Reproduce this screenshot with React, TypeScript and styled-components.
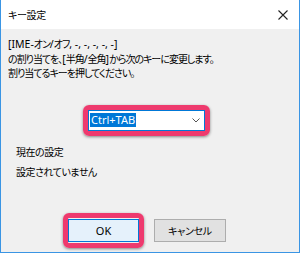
import React from "react";
import styled, { createGlobalStyle } from "styled-components";

const Global = createGlobalStyle`
  html, body { margin: 0; padding: 0; background: #ffffff; }
  body {
    font-family: "Noto Sans", "Noto Sans CJK JP", sans-serif;
    font-size: 10px;
    letter-spacing: -1px;
    color: #000;
    font-feature-settings: "palt";
  }
`;

const Window = styled.div`
  width: 300px;
  height: 253px;
  box-sizing: border-box;
  border: 1px solid #3a95e4;
  border-top: none;
  display: flex;
  flex-direction: column;
  background: #f0f0f0;
`;

const TitleBar = styled.div`
  height: 29px;
  flex: none;
  background: #ffffff;
  display: flex;
  align-items: center;
  justify-content: space-between;
  padding: 0 11px 0 7px;
`;

const Title = styled.span`
  line-height: 14px;
  letter-spacing: -0.3px;
  margin-top: 1px;
`;

const Body = styled.div`
  flex: 1;
  display: flex;
  flex-direction: column;
  padding: 8px 7px 4px 7px;
`;

const Message = styled.div`
  line-height: 14.5px;
`;

const Latin = styled.span`
  font-size: 10.5px;
  letter-spacing: 0;
`;

const Highlight = styled.div<{ $pad?: string }>`
  border: 5px solid #ee3a6e;
  border-radius: 6px;
  padding: ${(p) => p.$pad ?? "0"};
  box-shadow: 0 1px 3px rgba(0, 0, 0, 0.45);
  display: flex;
`;

const ComboArea = styled.div`
  display: flex;
  margin: 24px 0 0 75px;
`;

const Combo = styled.div`
  width: 117px;
  height: 21px;
  box-sizing: border-box;
  border: 1px solid #0078d7;
  background: #ffffff;
  display: flex;
  align-items: center;
  justify-content: space-between;
  padding: 0 4px 0 1px;
`;

const Selected = styled.span`
  background: #0078d7;
  color: #ffffff;
  font-size: 11px;
  letter-spacing: 0;
  line-height: 14px;
  padding: 0 1px;
`;

const Label = styled.div<{ $gap: number }>`
  margin: ${(p) => p.$gap}px 0 0 8px;
  line-height: 14px;
  letter-spacing: -0.5px;
`;

const ButtonRow = styled.div`
  margin: auto 0 0 55px;
  display: flex;
  align-items: center;
  gap: 10px;
`;

const Button = styled.button<{ $primary?: boolean }>`
  width: ${(p) => (p.$primary ? 71 : 72)}px;
  height: 23px;
  box-sizing: border-box;
  border: 1px solid ${(p) => (p.$primary ? "#0078d7" : "#adadad")};
  background: ${(p) => (p.$primary ? "#e5f1fb" : "#e1e1e1")};
  font-family: inherit;
  font-feature-settings: "palt";
  font-size: ${(p) => (p.$primary ? 11 : 10)}px;
  letter-spacing: ${(p) => (p.$primary ? 0 : -0.3)}px;
  color: #000;
  padding: 0;
  margin: 0;
`;

const CloseIcon = () => (
  <svg width="10" height="10" viewBox="0 0 10 10">
    <path d="M0.5 0.5 L9.5 9.5 M9.5 0.5 L0.5 9.5" stroke="#222" strokeWidth="1.1" />
  </svg>
);

const Chevron = () => (
  <svg width="8" height="5" viewBox="0 0 8 5">
    <path d="M0.5 0.5 L4 4 L7.5 0.5" stroke="#555" strokeWidth="1" fill="none" />
  </svg>
);

export default function App() {
  return (
    <>
      <Global />
      <Window>
        <TitleBar>
          <Title>キー設定</Title>
          <CloseIcon />
        </TitleBar>
        <Body>
          <Message>
            <Latin>[IME-</Latin>オン<Latin>/</Latin>オフ<Latin>, -, -, -, -, -]</Latin>
            <br />
            の割り当てを、<Latin>[</Latin>半角<Latin>/</Latin>全角<Latin>]</Latin>から次のキーに変更します。
            <br />
            割り当てるキーを押してください。
          </Message>
          <ComboArea>
            <Highlight>
              <Combo>
                <Selected>Ctrl+TAB</Selected>
                <Chevron />
              </Combo>
            </Highlight>
          </ComboArea>
          <Label $gap={9}>現在の設定</Label>
          <Label $gap={6}>設定されていません</Label>
          <ButtonRow>
            <Highlight $pad="1px 0">
              <Button $primary>OK</Button>
            </Highlight>
            <Button>キャンセル</Button>
          </ButtonRow>
        </Body>
      </Window>
    </>
  );
}
